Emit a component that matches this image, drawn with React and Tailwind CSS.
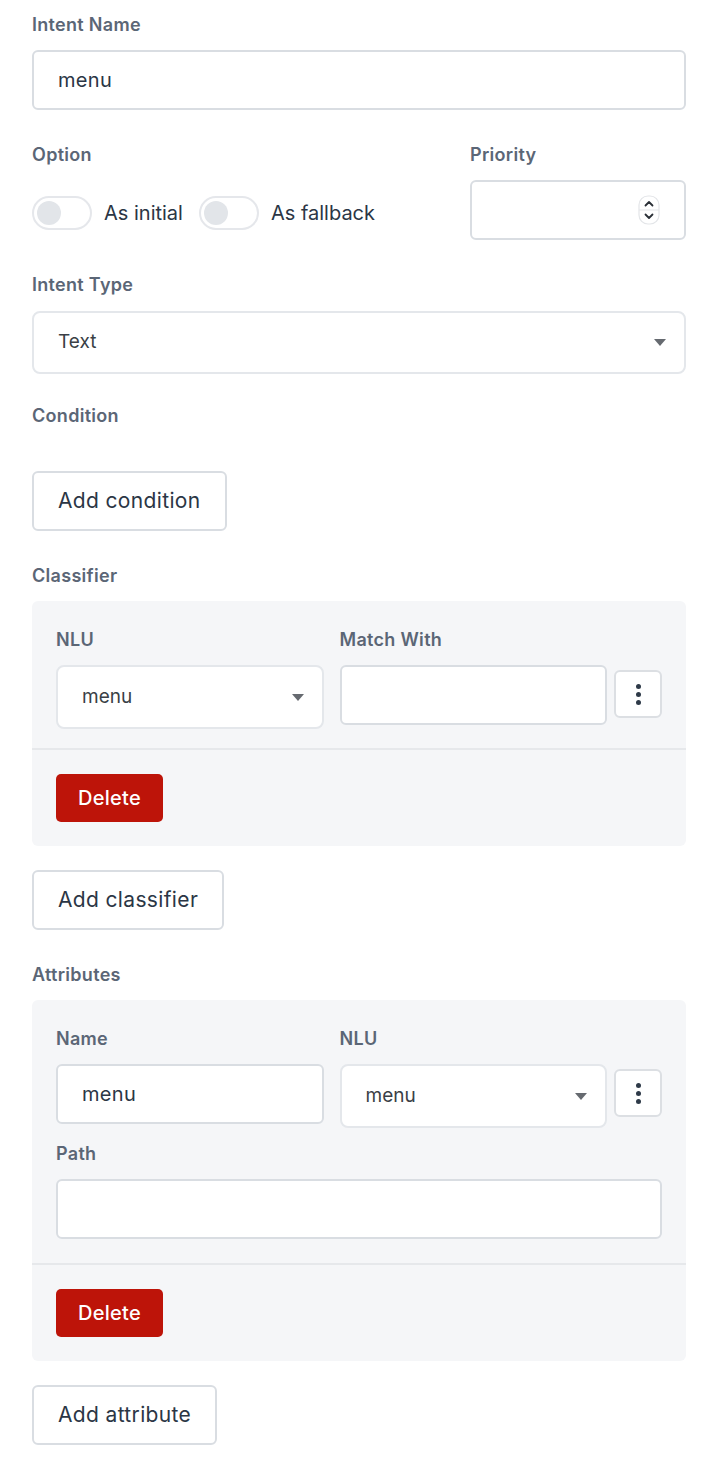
import React from "react";

const font = { fontFamily: "Inter, 'Noto Sans', sans-serif" };

function Label({ children, className = "" }) {
  return (
    <div className={`text-[18px] leading-[24px] font-semibold tracking-[0.3px] text-[#5b6676] ${className}`}>
      {children}
    </div>
  );
}

function TextInput({ value = "", className = "" }) {
  return (
    <div
      className={`h-[60px] rounded-[6px] border-2 border-[#d9dde2] bg-white flex items-center px-[24px] text-[20px] tracking-[0.3px] text-[#2b3645] ${className}`}
    >
      {value}
    </div>
  );
}

function Caret() {
  return (
    <svg width="12" height="7" viewBox="0 0 12 7">
      <path d="M0 0 L12 0 L6 7 Z" fill="#666a70" />
    </svg>
  );
}

function Select({ value, className = "" }) {
  return (
    <div
      className={`h-[63px] rounded-[8px] border-2 border-[#e4e7eb] bg-white flex items-center justify-between pl-[24px] pr-[18px] text-[19px] text-[#3a3f46] ${className}`}
    >
      <span>{value}</span>
      <Caret />
    </div>
  );
}

function Toggle({ label }) {
  return (
    <div className="flex items-center gap-[12px]">
      <div className="w-[60px] h-[34px] rounded-full border-2 border-[#e5e7eb] bg-white flex items-center pl-[3px]">
        <div className="w-[24px] h-[24px] rounded-full bg-[#e2e5e9]" />
      </div>
      <span className="text-[20px] tracking-[0px] text-[#2b3645]">{label}</span>
    </div>
  );
}

function Kebab() {
  return (
    <div className="w-[48px] h-[48px] shrink-0 rounded-[6px] border-2 border-[#dcdfe3] bg-white flex flex-col items-center justify-center gap-[3px]">
      <div className="w-[5px] h-[5px] rounded-full bg-[#2e3a48]" />
      <div className="w-[5px] h-[5px] rounded-full bg-[#2e3a48]" />
      <div className="w-[5px] h-[5px] rounded-full bg-[#2e3a48]" />
    </div>
  );
}

function OutlineButton({ children }) {
  return (
    <div className="self-start h-[60px] rounded-[6px] border-2 border-[#d9dde2] bg-white flex items-center px-[24px] text-[21px] text-[#2b3645] tracking-[0.35px]">
      {children}
    </div>
  );
}

function DeleteButton() {
  return (
    <div className="self-start h-[48px] w-[107px] rounded-[5px] bg-[#bd1409] flex items-center justify-center text-[20px] font-medium tracking-[0.3px] text-white">
      Delete
    </div>
  );
}

function Spinner() {
  return (
    <svg width="22" height="30" viewBox="0 0 22 30">
      <rect x="1" y="1" width="20" height="28" rx="9" fill="#fff" stroke="#e3e5e8" strokeWidth="1.2" />
      <line x1="1" y1="15" x2="21" y2="15" stroke="#e3e5e8" strokeWidth="1" />
      <path d="M7.5 10.5 L11 7 L14.5 10.5" fill="none" stroke="#2a2f36" strokeWidth="1.8" strokeLinecap="round" strokeLinejoin="round" />
      <path d="M7.5 19.5 L11 23 L14.5 19.5" fill="none" stroke="#2a2f36" strokeWidth="1.8" strokeLinecap="round" strokeLinejoin="round" />
    </svg>
  );
}

export default function App() {
  return (
    <div style={font} className="w-[722px] min-h-[1484px] bg-white pl-[32px] pr-[36px] pt-[13px] pb-[39px] flex flex-col">
      <Label>Intent Name</Label>
      <TextInput value="menu" className="mt-[13px]" />

      <div className="mt-[33px] grid grid-cols-[1fr_216px] gap-x-[22px]">
        <div className="flex flex-col">
          <Label>Option</Label>
          <div className="mt-[13px] h-[60px] flex items-start pt-[16px] gap-[16px]">
            <Toggle label="As initial" />
            <Toggle label="As fallback" />
          </div>
        </div>
        <div className="flex flex-col">
          <Label>Priority</Label>
          <div className="mt-[13px] h-[60px] rounded-[6px] border-2 border-[#d9dde2] bg-white flex items-center justify-end pr-[24px]">
            <Spinner />
          </div>
        </div>
      </div>

      <Label className="mt-[33px]">Intent Type</Label>
      <Select value="Text" className="mt-[14px]" />

      <Label className="mt-[30px]">Condition</Label>
      <div className="mt-[43px] flex">
        <OutlineButton>Add condition</OutlineButton>
      </div>

      <Label className="mt-[33px]">Classifier</Label>
      <div className="mt-[13px] rounded-[6px] bg-[#f5f6f8] flex flex-col">
        <div className="px-[24px] pt-[27px] pb-[19px]">
          <div className="flex items-start">
            <div className="flex-1 flex flex-col">
              <Label>NLU</Label>
              <Select value="menu" className="mt-[13px] h-[64px]" />
            </div>
            <div className="flex-1 flex flex-col ml-[16px]">
              <Label>Match With</Label>
              <TextInput className="mt-[13px] h-[59px]" />
            </div>
            <div className="ml-[7px] mt-[42px]">
              <Kebab />
            </div>
          </div>
        </div>
        <div className="h-[2px] bg-[#e6e8eb]" />
        <div className="px-[24px] pt-[24px] pb-[24px] flex">
          <DeleteButton />
        </div>
      </div>

      <div className="mt-[24px] flex">
        <OutlineButton>Add classifier</OutlineButton>
      </div>

      <Label className="mt-[33px]">Attributes</Label>
      <div className="mt-[13px] rounded-[6px] bg-[#f5f6f8] flex flex-col">
        <div className="px-[24px] pt-[27px] pb-[24px]">
          <div className="flex items-start">
            <div className="flex-1 flex flex-col">
              <Label>Name</Label>
              <TextInput value="menu" className="mt-[13px] h-[59px]" />
            </div>
            <div className="flex-1 flex flex-col ml-[16px]">
              <Label>NLU</Label>
              <Select value="menu" className="mt-[13px] h-[64px]" />
            </div>
            <div className="ml-[7px] mt-[42px]">
              <Kebab />
            </div>
          </div>
          <Label className="mt-[14px]">Path</Label>
          <TextInput className="mt-[13px] h-[59px]" />
        </div>
        <div className="h-[2px] bg-[#e6e8eb]" />
        <div className="px-[24px] pt-[24px] pb-[24px] flex">
          <DeleteButton />
        </div>
      </div>

      <div className="mt-[24px] flex">
        <OutlineButton>Add attribute</OutlineButton>
      </div>
    </div>
  );
}
